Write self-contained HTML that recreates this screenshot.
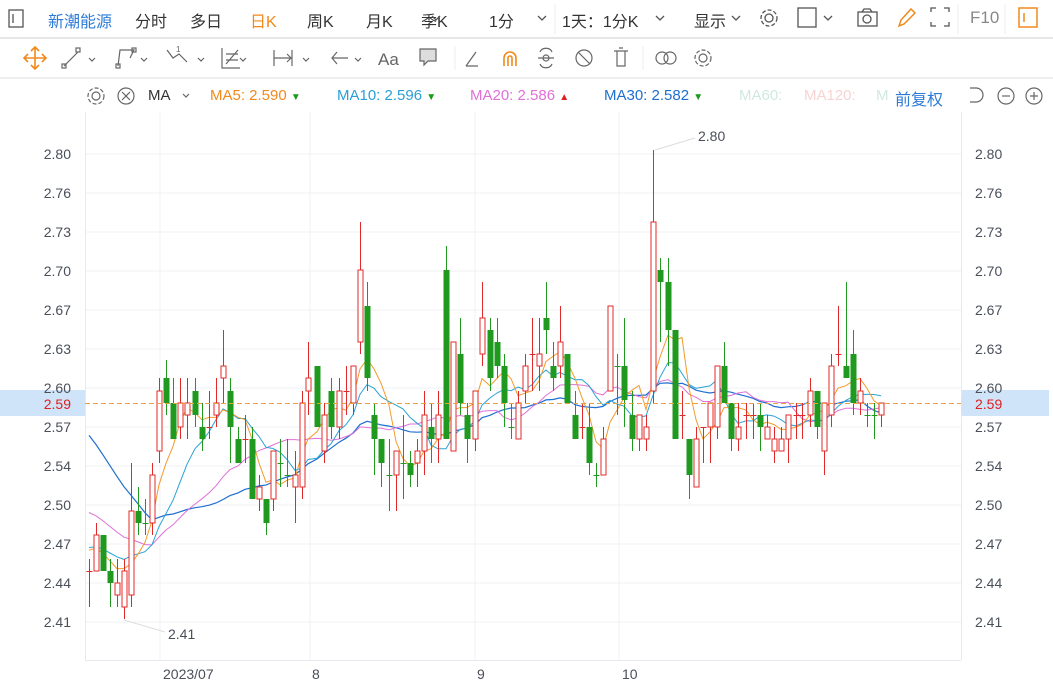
<!DOCTYPE html>
<html><head><meta charset="utf-8"><style>
*{margin:0;padding:0;box-sizing:border-box}
body{width:1053px;height:688px;background:#fff;font-family:"Liberation Sans","Noto Sans CJK SC",sans-serif;position:relative;overflow:hidden;color:#333}
.t{position:absolute;white-space:nowrap;font-size:16px}
.s{position:absolute;white-space:nowrap;font-size:15px}
svg{position:absolute;left:0;top:0}
</style></head><body>
<div class="t" style="left:48px;top:8px;color:#2d7bd6">新潮能源</div>
<div class="t" style="left:135px;top:8px">分时</div>
<div class="t" style="left:190px;top:8px">多日</div>
<div class="t" style="left:250px;top:8px;color:#f08a1c">日K</div>
<div class="t" style="left:307px;top:8px">周K</div>
<div class="t" style="left:366px;top:8px">月K</div>
<div class="t" style="left:421px;top:8px">季K</div>
<div class="t" style="left:489px;top:8px">1分</div>
<div class="t" style="left:562px;top:8px">1天：1分K</div>
<div class="t" style="left:694px;top:8px">显示</div>
<div class="t" style="left:970px;top:8px;color:#888;font-size:17px">F10</div>
<div class="s" style="left:148px;top:87px">MA</div>
<div class="s" style="left:210px;top:87px;color:#f08a1c">MA5: 2.590 <span style="color:#1a9a1a;font-size:10px">▼</span></div>
<div class="s" style="left:337px;top:87px;color:#2a9fd8">MA10: 2.596 <span style="color:#1a9a1a;font-size:10px">▼</span></div>
<div class="s" style="left:470px;top:87px;color:#e070d8">MA20: 2.586 <span style="color:#e02020;font-size:10px">▲</span></div>
<div class="s" style="left:604px;top:87px;color:#1e6fd0">MA30: 2.582 <span style="color:#1a9a1a;font-size:10px">▼</span></div>
<div class="s" style="left:739px;top:87px;color:#cfe9df">MA60:</div>
<div class="s" style="left:804px;top:87px;color:#f7d3d3">MA120:</div>
<div class="s" style="left:876px;top:87px;color:#cfe9df">M</div>
<div class="t" style="left:895px;top:86px;color:#2d7bd6">前复权</div>

<svg width="1053" height="688" id="sv">
<g stroke="#555" fill="none" stroke-width="1.3">
 <rect x="9" y="10" width="14" height="17"/><line x1="13" y1="14" x2="13" y2="23"/>
 <path d="M432 16l4 4 4-4M538 16l4 4 4-4M656 16l4 4 4-4M732 16l4 4 4-4M824 16l4 4 4-4"/>
 <circle cx="769" cy="18" r="4"/><circle cx="769" cy="18" r="8" stroke-dasharray="4 2"/>
 <rect x="798" y="8" width="18" height="19"/>
 <rect x="858" y="12" width="19" height="14"/><circle cx="867" cy="19" r="4"/><path d="M862 12l2-3h6l2 3"/>
 <path d="M931 12v-4h5M949 12v-4h-5M931 22v4h5M949 22v4h-5"/>
</g>
<path d="M899 26l2-6 10-11 4 4-11 11z" stroke="#f08a1c" fill="none" stroke-width="1.5"/>
<rect x="1019" y="8" width="18" height="19" stroke="#f08a1c" fill="none" stroke-width="1.5"/><line x1="1024" y1="13" x2="1024" y2="22" stroke="#f08a1c" stroke-width="1.5"/>
<line x1="555" y1="4" x2="555" y2="34" stroke="#eee"/><line x1="958" y1="4" x2="958" y2="34" stroke="#eee"/><line x1="1005" y1="4" x2="1005" y2="34" stroke="#eee"/>
<line x1="0" y1="38" x2="1053" y2="38" stroke="#e6e6e6" stroke-width="2"/>
<line x1="0" y1="78" x2="1053" y2="78" stroke="#eee" stroke-width="2"/>
<path d="M35 47v22M24 58h22M31 51l4-4 4 4M31 65l4 4 4-4M28 54l-4 4 4 4M42 54l4 4-4 4" stroke="#f08a1c" fill="none" stroke-width="1.6"/>
<g stroke="#666" fill="none" stroke-width="1.2">
 <path d="M64 66l14-14"/><rect x="62" y="64" width="4" height="4"/><rect x="76" y="48" width="4" height="4"/>
 <path d="M89 58l3 3 3-3M141 58l3 3 3-3M198 58l3 3 3-3M240 58l3 3 3-3M303 58l3 3 3-3M355 58l3 3 3-3"/>
 <path d="M118 66l2-16h14l-4 8"/><rect x="116" y="64" width="4" height="4"/><rect x="132" y="48" width="4" height="4"/>
 <path d="M167 50l6 8 6-4 8 8"/><text x="176" y="52" font-size="8" fill="#666" stroke="none">1</text>
 <path d="M222 48v20h18M226 64l12-14M226 54h12M226 60h12"/>
 <path d="M274 50v16M274 58h18M292 50v16M287 54l4 4-4 4"/>
 <path d="M332 58h16M337 52l-5 6 5 6"/>
 <path d="M420 49h16v12h-8l-4 4v-4h-4z" fill="#ddd"/>
 <path d="M466 66l10-14M466 66h12"/>
 <path d="M540 52c2-5 10-5 12 0M540 64c2 5 10 5 12 0M538 58h16"/><circle cx="546" cy="58" r="3"/>
 <circle cx="584" cy="58" r="8"/><path d="M578 52l12 12"/>
 <path d="M614 51h14M617 51v15h8v-15M619 48h4"/>
 <circle cx="662" cy="58" r="6"/><circle cx="670" cy="58" r="6"/>
 <circle cx="703" cy="58" r="4"/><circle cx="703" cy="58" r="8" stroke-dasharray="4 2"/>
</g>
<text x="378" y="65" font-size="17" fill="#666" font-family="Liberation Sans">Aa</text>
<path d="M504 66v-8a6 6 0 0 1 12 0v8M508 66v-8a2 2 0 0 1 4 0v8" stroke="#f08a1c" fill="none" stroke-width="1.6"/>
<line x1="455" y1="46" x2="455" y2="70" stroke="#eee"/><line x1="643" y1="46" x2="643" y2="70" stroke="#eee"/>
<g stroke="#666" fill="none" stroke-width="1.2">
 <circle cx="96" cy="96" r="4"/><circle cx="96" cy="96" r="8" stroke-dasharray="4 2"/>
 <circle cx="126" cy="96" r="8"/><path d="M122 92l8 8M130 92l-8 8"/>
 <path d="M183 94l3 3 3-3"/>
 <path d="M970 88h6a7 7 0 0 1 0 14h-6"/>
 <circle cx="1006" cy="96" r="8"/><path d="M1002 96h8"/>
 <circle cx="1034" cy="96" r="8"/><path d="M1030 96h8M1034 92v8"/>
</g>
<rect x="0" y="390" width="85" height="26" fill="#cfe3f9"/>
<rect x="961" y="390" width="88" height="26" fill="#cfe3f9"/>
<g stroke="#eef0f3">
<line x1="85" y1="154" x2="961" y2="154"/><line x1="85" y1="193" x2="961" y2="193"/><line x1="85" y1="232" x2="961" y2="232"/><line x1="85" y1="271" x2="961" y2="271"/><line x1="85" y1="310" x2="961" y2="310"/><line x1="85" y1="349" x2="961" y2="349"/><line x1="85" y1="388" x2="961" y2="388"/><line x1="85" y1="427" x2="961" y2="427"/><line x1="85" y1="466" x2="961" y2="466"/><line x1="85" y1="505" x2="961" y2="505"/><line x1="85" y1="544" x2="961" y2="544"/><line x1="85" y1="583" x2="961" y2="583"/><line x1="85" y1="622" x2="961" y2="622"/>
<line x1="160" y1="112" x2="160" y2="660"/><line x1="310" y1="112" x2="310" y2="660"/><line x1="475" y1="112" x2="475" y2="660"/><line x1="619" y1="112" x2="619" y2="660"/>
</g>
<g stroke="#e6e9ee"><line x1="85.5" y1="112" x2="85.5" y2="660"/><line x1="961.5" y1="112" x2="961.5" y2="660"/><line x1="85" y1="660.5" x2="961" y2="660.5"/></g>
<g font-size="14" fill="#4a4f5a" font-family="Liberation Sans" text-anchor="end">
<text x="71" y="159">2.80</text><text x="71" y="198">2.76</text><text x="71" y="237">2.73</text><text x="71" y="276">2.70</text><text x="71" y="315">2.67</text><text x="71" y="354">2.63</text><text x="71" y="393">2.60</text><text x="71" y="432">2.57</text><text x="71" y="471">2.54</text><text x="71" y="510">2.50</text><text x="71" y="549">2.47</text><text x="71" y="588">2.44</text><text x="71" y="627">2.41</text>
</g>
<g font-size="14" fill="#4a4f5a" font-family="Liberation Sans">
<text x="975" y="159">2.80</text><text x="975" y="198">2.76</text><text x="975" y="237">2.73</text><text x="975" y="276">2.70</text><text x="975" y="315">2.67</text><text x="975" y="354">2.63</text><text x="975" y="393">2.60</text><text x="975" y="432">2.57</text><text x="975" y="471">2.54</text><text x="975" y="510">2.50</text><text x="975" y="549">2.47</text><text x="975" y="588">2.44</text><text x="975" y="627">2.41</text>
<text x="163" y="679">2023/07</text><text x="312" y="679">8</text><text x="477" y="679">9</text><text x="622" y="679">10</text>
<text x="698" y="141">2.80</text><text x="168" y="639">2.41</text>
</g>
<rect x="0" y="397" width="85" height="17" fill="#cfe3f9"/><rect x="961" y="397" width="85" height="17" fill="#cfe3f9"/>
<text x="71" y="409" font-size="14" fill="#e02020" text-anchor="end" font-family="Liberation Sans">2.59</text>
<text x="975" y="409" font-size="14" fill="#e02020" font-family="Liberation Sans">2.59</text>
<line x1="655" y1="150" x2="695" y2="138" stroke="#ddd"/><line x1="124" y1="620" x2="165" y2="632" stroke="#ddd"/>
<g id="ma"></g><g id="cd"></g>
<line x1="85" y1="403.5" x2="961" y2="403.5" stroke="#e8a040" stroke-dasharray="5 3"/>
</svg>
<script>
var D=[[89,571,571,559,607,1],[96,571,535,523,571,1],[103,535,571,535,571,0],[110,571,583,559,607,0],[117,595,583,559,607,1],[124,607,571,559,619,1],[131,595,511,463,607,1],[138,511,523,487,535,0],[145,523,524,499,535,0],[152,523,475,463,535,1],[159,451,391,378,463,1],[166,378,403,360,415,0],[173,403,439,378,439,0],[180,427,403,378,439,1],[187,415,403,378,439,1],[195,391,415,378,427,0],[202,427,439,403,451,0],[209,427,427,391,439,1],[216,415,403,378,427,1],[223,378,366,330,403,1],[230,391,427,378,463,0],[238,439,463,427,463,0],[245,439,439,415,463,1],[252,439,499,427,499,0],[259,499,487,475,511,1],[266,499,523,499,535,0],[273,499,451,451,511,1],[280,463,464,439,487,0],[287,475,476,439,487,0],[295,487,475,451,523,1],[302,487,403,391,499,1],[308,391,378,342,415,1],[317,366,427,366,427,0],[324,451,415,403,463,1],[331,391,427,378,439,0],[339,427,391,378,439,1],[346,391,391,366,415,1],[353,403,366,366,415,1],[360,342,270,222,354,1],[367,306,378,282,391,0],[374,415,439,403,475,0],[381,439,463,439,487,0],[389,475,476,439,511,0],[396,475,451,451,511,1],[403,463,464,415,499,0],[410,463,475,451,487,0],[417,463,451,439,487,1],[424,451,415,391,475,1],[431,427,439,403,463,0],[438,439,415,391,463,1],[446,270,439,246,439,0],[453,451,342,342,451,1],[460,354,403,318,415,0],[467,415,439,403,463,0],[475,439,391,391,451,1],[482,354,318,282,366,1],[490,330,378,318,391,0],[497,342,366,318,378,0],[504,366,403,354,427,0],[511,427,428,403,439,0],[518,439,403,391,439,1],[525,391,366,354,403,1],[532,354,354,318,391,1],[539,366,354,318,391,1],[546,318,330,282,354,0],[553,366,378,342,391,0],[560,366,342,306,378,1],[567,354,403,354,403,0],[575,415,439,391,439,0],[582,427,427,403,439,1],[589,427,463,403,475,0],[596,475,476,463,487,0],[603,475,439,427,475,1],[610,391,306,306,391,1],[617,366,367,354,415,0],[624,366,400,318,427,0],[632,415,439,391,451,0],[639,439,415,415,451,1],[646,439,427,415,451,1],[653,391,222,150,403,1],[660,270,282,258,342,0],[668,282,330,258,366,0],[675,330,439,330,439,0],[682,415,415,391,439,1],[689,439,475,439,499,0],[696,487,439,427,487,1],[703,427,427,427,463,1],[710,427,403,403,463,1],[717,427,366,366,439,1],[724,366,403,342,403,0],[731,403,439,403,451,0],[738,439,427,403,451,1],[746,415,415,403,439,1],[753,415,415,403,439,1],[760,415,427,403,451,0],[767,439,427,415,439,1],[774,451,439,427,463,1],[781,451,439,427,451,1],[788,439,415,415,463,1],[796,415,415,403,439,1],[802,415,415,403,439,1],[810,415,391,378,427,1],[817,391,427,391,439,0],[824,451,403,403,475,1],[831,415,366,354,427,1],[838,354,354,306,366,1],[846,366,378,282,378,0],[853,354,403,330,415,0],[860,403,391,378,415,1],[867,415,416,403,427,0],[874,415,416,403,439,0],[881,415,403,403,427,1]];
var NS="http://www.w3.org/2000/svg",cd=document.getElementById("cd"),ma=document.getElementById("ma");
function el(t,a,p){var e=document.createElementNS(NS,t);for(var k in a)e.setAttribute(k,a[k]);p.appendChild(e);return e}
var closes=[];for(var i=0;i<10;i++)closes.push(260);for(i=0;i<10;i++)closes.push(470);for(i=0;i<10;i++)closes.push(545);
D.forEach(function(d){var x=d[0]+.5,up=d[5],c=up?"#e02a2a":"#1f9a1f";var top=Math.min(d[1],d[2]),bot=Math.max(d[1],d[2]);
el("line",{x1:x,y1:d[3],x2:x,y2:d[4],stroke:c,"stroke-width":1},cd);
if(bot-top<2){el("line",{x1:x-3,y1:top+.5,x2:x+3,y2:top+.5,stroke:c},cd)}
else if(up){el("rect",{x:x-2.5,y:top,width:5,height:bot-top,fill:"#fff",stroke:c,"stroke-width":1},cd)}
else{el("rect",{x:x-3,y:top,width:6,height:bot-top,fill:c},cd)}
closes.push(up?top:bot)});
function M(n,col,w){var pts=[];for(var i=0;i<D.length;i++){var k=i+30,s=0;for(var j=k-n+1;j<=k;j++)s+=closes[j];pts.push(D[i][0]+","+(s/n).toFixed(1))}
el("polyline",{points:pts.join(" "),fill:"none",stroke:col,"stroke-width":w},ma)}
M(30,"#1e6fd0",1.2);M(20,"#e070d8",1);M(10,"#2aa3d6",1);M(5,"#f39a2a",1);
</script>
</body></html>
